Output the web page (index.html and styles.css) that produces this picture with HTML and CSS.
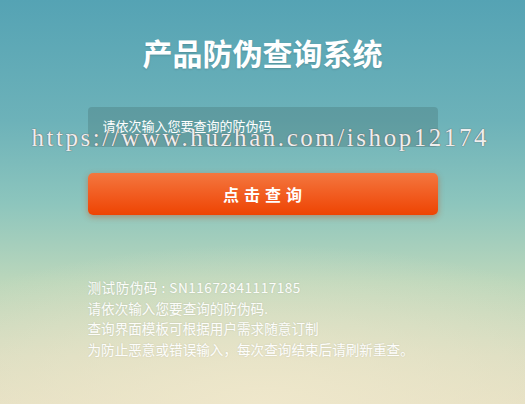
FILE: index.html
```html
<!DOCTYPE html>
<html>
<head>
    <meta charset="UTF-8">
    <meta name="viewport" content="width=device-width, initial-scale=1.0">
    <title>产品防伪查询系统</title>
    <link rel="stylesheet" href="styles.css">
</head>
<body>
    <div class="wrap">
        <h1 class="title">产品防伪查询系统</h1>
        <form class="search" method="GET" action="#">
            <div class="codeRow">
                <input type="text" class="codeInput" placeholder="请依次输入您要查询的防伪码" />
                <span class="mark">https://www.huzhan.com/ishop12174</span>
            </div>
            <button type="submit" class="searchBtn">点击查询</button>
        </form>
        <div class="tips">
            <p class="testCode">测试防伪码 : SN11672841117185</p>
            <p>请依次输入您要查询的防伪码.</p>
            <p>查询界面模板可根据用户需求随意订制</p>
            <p>为防止恶意或错误输入，每次查询结束后请刷新重查。</p>
        </div>
    </div>
</body>
</html>
```

FILE: styles.css
```css
*{ margin: 0; padding: 0; box-sizing: border-box; }
html, body{ height: 100%; }
body{
    font-family: "Noto Sans CJK SC", "Liberation Sans", sans-serif;
    color: #fff;
    background:
        radial-gradient(ellipse 420px 160px at 50% 100%, rgba(240,232,204,0.9), rgba(240,232,204,0) 100%),
        linear-gradient(180deg, #55a3b4 0%, #6db2b9 30%, #8cc5bd 50%, #bcd7bb 70%, #d8dcc0 88%, #e4dfc2 100%);
    overflow: hidden;
}
.wrap{ width: 350px; margin: 0 auto; padding-top: 32px; }
.title{ font-size: 30px; font-weight: bold; text-align: center; line-height: 40px; text-shadow: 0 1px 2px rgba(0,0,0,0.15); }
.search{ margin-top: 35px; }
.codeRow{ position: relative; }
.codeInput{ display: block; width: 350px; height: 40px; border: none; border-radius: 4px; background: rgba(60,100,100,0.28); padding: 0 15px 4px; font-family: "Noto Sans CJK SC", sans-serif; font-size: 13px; color: #fff; outline: none; }
.codeInput::placeholder{ color: #fff; opacity: 1; }
.mark{ position: absolute; left: -56px; top: 18px; white-space: nowrap; font-family: "Liberation Serif", serif; font-size: 25px; line-height: 26px; letter-spacing: 2.55px; color: #eeeeee; text-shadow: 0 0 1px #666, 0 0 1px #666; pointer-events: none; }
.searchBtn{ display: block; width: 350px; height: 42px; margin-top: 26px; border: none; border-radius: 5px; background: linear-gradient(180deg, #f3773f 0%, #f15a1e 55%, #ee4402 100%); box-shadow: 0 2px 6px rgba(200,70,20,0.45); color: #fff; font-family: "Noto Sans CJK SC", sans-serif; font-size: 16px; font-weight: bold; letter-spacing: 5px; text-indent: 5px; cursor: pointer; }
.tips{ margin-top: 62px; font-size: 13.6px; line-height: 20.7px; text-shadow: 0 0 2px rgba(0,0,0,0.12); opacity: 0.95; }
.testCode{ letter-spacing: 0.5px; }
```
